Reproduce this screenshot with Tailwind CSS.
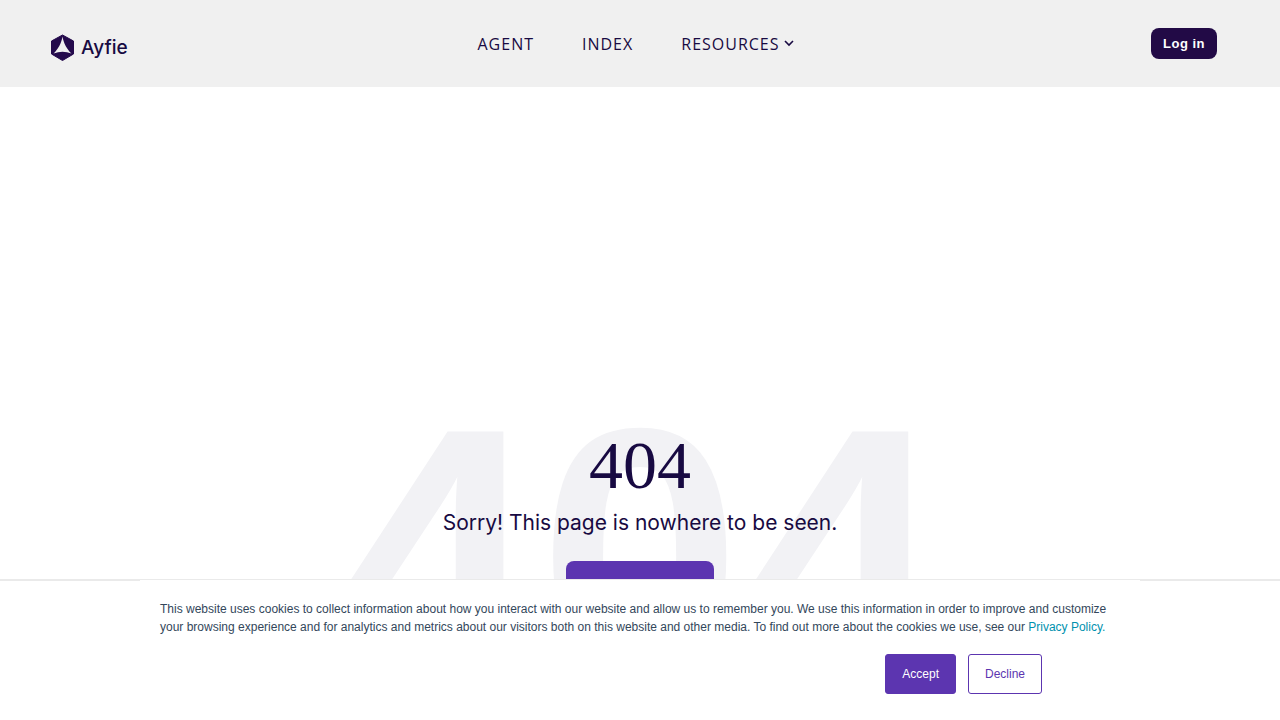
<!DOCTYPE html>
<html lang="en">
<head>
<meta charset="utf-8">
<meta name="viewport" content="width=device-width, initial-scale=1">
<title>Ayfie - Page not found</title>
<script src="https://cdn.jsdelivr.net/npm/@tailwindcss/browser@4"></script>
</head>
<body class="flex h-screen flex-col overflow-hidden bg-white font-['Liberation_Sans',sans-serif] text-[#180a42]">
<header class="grid shrink-0 grid-cols-[1fr_auto_1fr] items-center bg-[#f0f0f0] py-6 pr-[63px] pl-[50px]">
  <a href="#" class="flex items-center gap-[6px] pt-[10px] pb-[2px]" aria-label="Ayfie home">
    <svg class="h-[27px] w-[25px]" viewBox="0 0 25 27" aria-hidden="true">
      <path d="M12.5 1 L23.5 7 V20 L12.5 26.500 L1.500 20 V7 Z" fill="#240a4c" stroke="#240a4c" stroke-linejoin="round"/>
      <path d="M12.500 2.500 C13.500 9 17 15.500 21.500 19.500 C15.500 17.300 9.500 17.300 3.500 19.500 C8 15.500 11.500 9 12.500 2.500 Z" fill="#f0f0f0"/>
    </svg>
    <span class="font-['Inter',sans-serif] text-[19px] leading-6 font-medium">Ayfie</span>
  </a>
  <nav class="flex items-center gap-12 pl-1 font-['Open_Sans',sans-serif] text-base leading-6 tracking-[1px]">
    <a href="#">AGENT</a>
    <a href="#">INDEX</a>
    <button type="button" class="flex items-center gap-1 tracking-[1px]">RESOURCES
      <svg class="h-[10px] w-[10px]" viewBox="0 0 10 10" fill="none" stroke="currentColor" stroke-width="1.600" aria-hidden="true"><path d="M1 2 L5 6 L9 2"/></svg>
    </button>
  </nav>
  <a href="#" class="justify-self-end rounded-lg bg-[#220a46] px-3 py-[6px] text-[13px] leading-[19px] font-bold tracking-[0.5px] text-white">Log in</a>
</header>

<main class="grid min-h-0 grow justify-items-center overflow-hidden pt-[294px]">
  <div class="col-start-1 row-start-1 text-[364px] leading-[350px] font-bold text-[#f2f2f5]" aria-hidden="true">404</div>
  <section class="z-10 col-start-1 row-start-1 flex flex-col items-center pt-12">
    <h1 class="font-['Liberation_Serif',serif] text-[68px] leading-[72px]">404</h1>
    <p class="mt-[6px] mb-[2px] font-['Inter',sans-serif] text-[21px] leading-8">Sorry! This page is nowhere to be seen.</p>
    <a href="#" class="mt-5 h-12 w-[148px] rounded-lg bg-[#5c35b0]" aria-label="Go home"></a>
  </section>
</main>

<aside class="fixed inset-x-0 bottom-0 z-20 border-t-2 border-[#eaeaea] bg-white text-xs" aria-label="Cookie notice">
  <div class="mx-auto -mt-px max-w-[1000px] bg-white px-5 pt-5 pb-[26px]">
    <p class="leading-[18px] text-[#33475b]">This website uses cookies to collect information about how you interact with our website and allow us to remember you. We use this information in order to improve and customize your browsing experience and for analytics and metrics about our visitors both on this website and other media. To find out more about the cookies we use, see our <a href="#" class="text-[#0091ae]">Privacy Policy.</a></p>
    <div class="mt-[18px] flex justify-end gap-3 pr-[78px]">
      <button type="button" class="h-10 rounded-[3px] border border-[#5c35b0] bg-[#5c35b0] px-4 text-white">Accept</button>
      <button type="button" class="h-10 rounded-[3px] border border-[#5c35b0] bg-white px-4 text-[#5c35b0]">Decline</button>
    </div>
  </div>
</aside>
</body>
</html>
